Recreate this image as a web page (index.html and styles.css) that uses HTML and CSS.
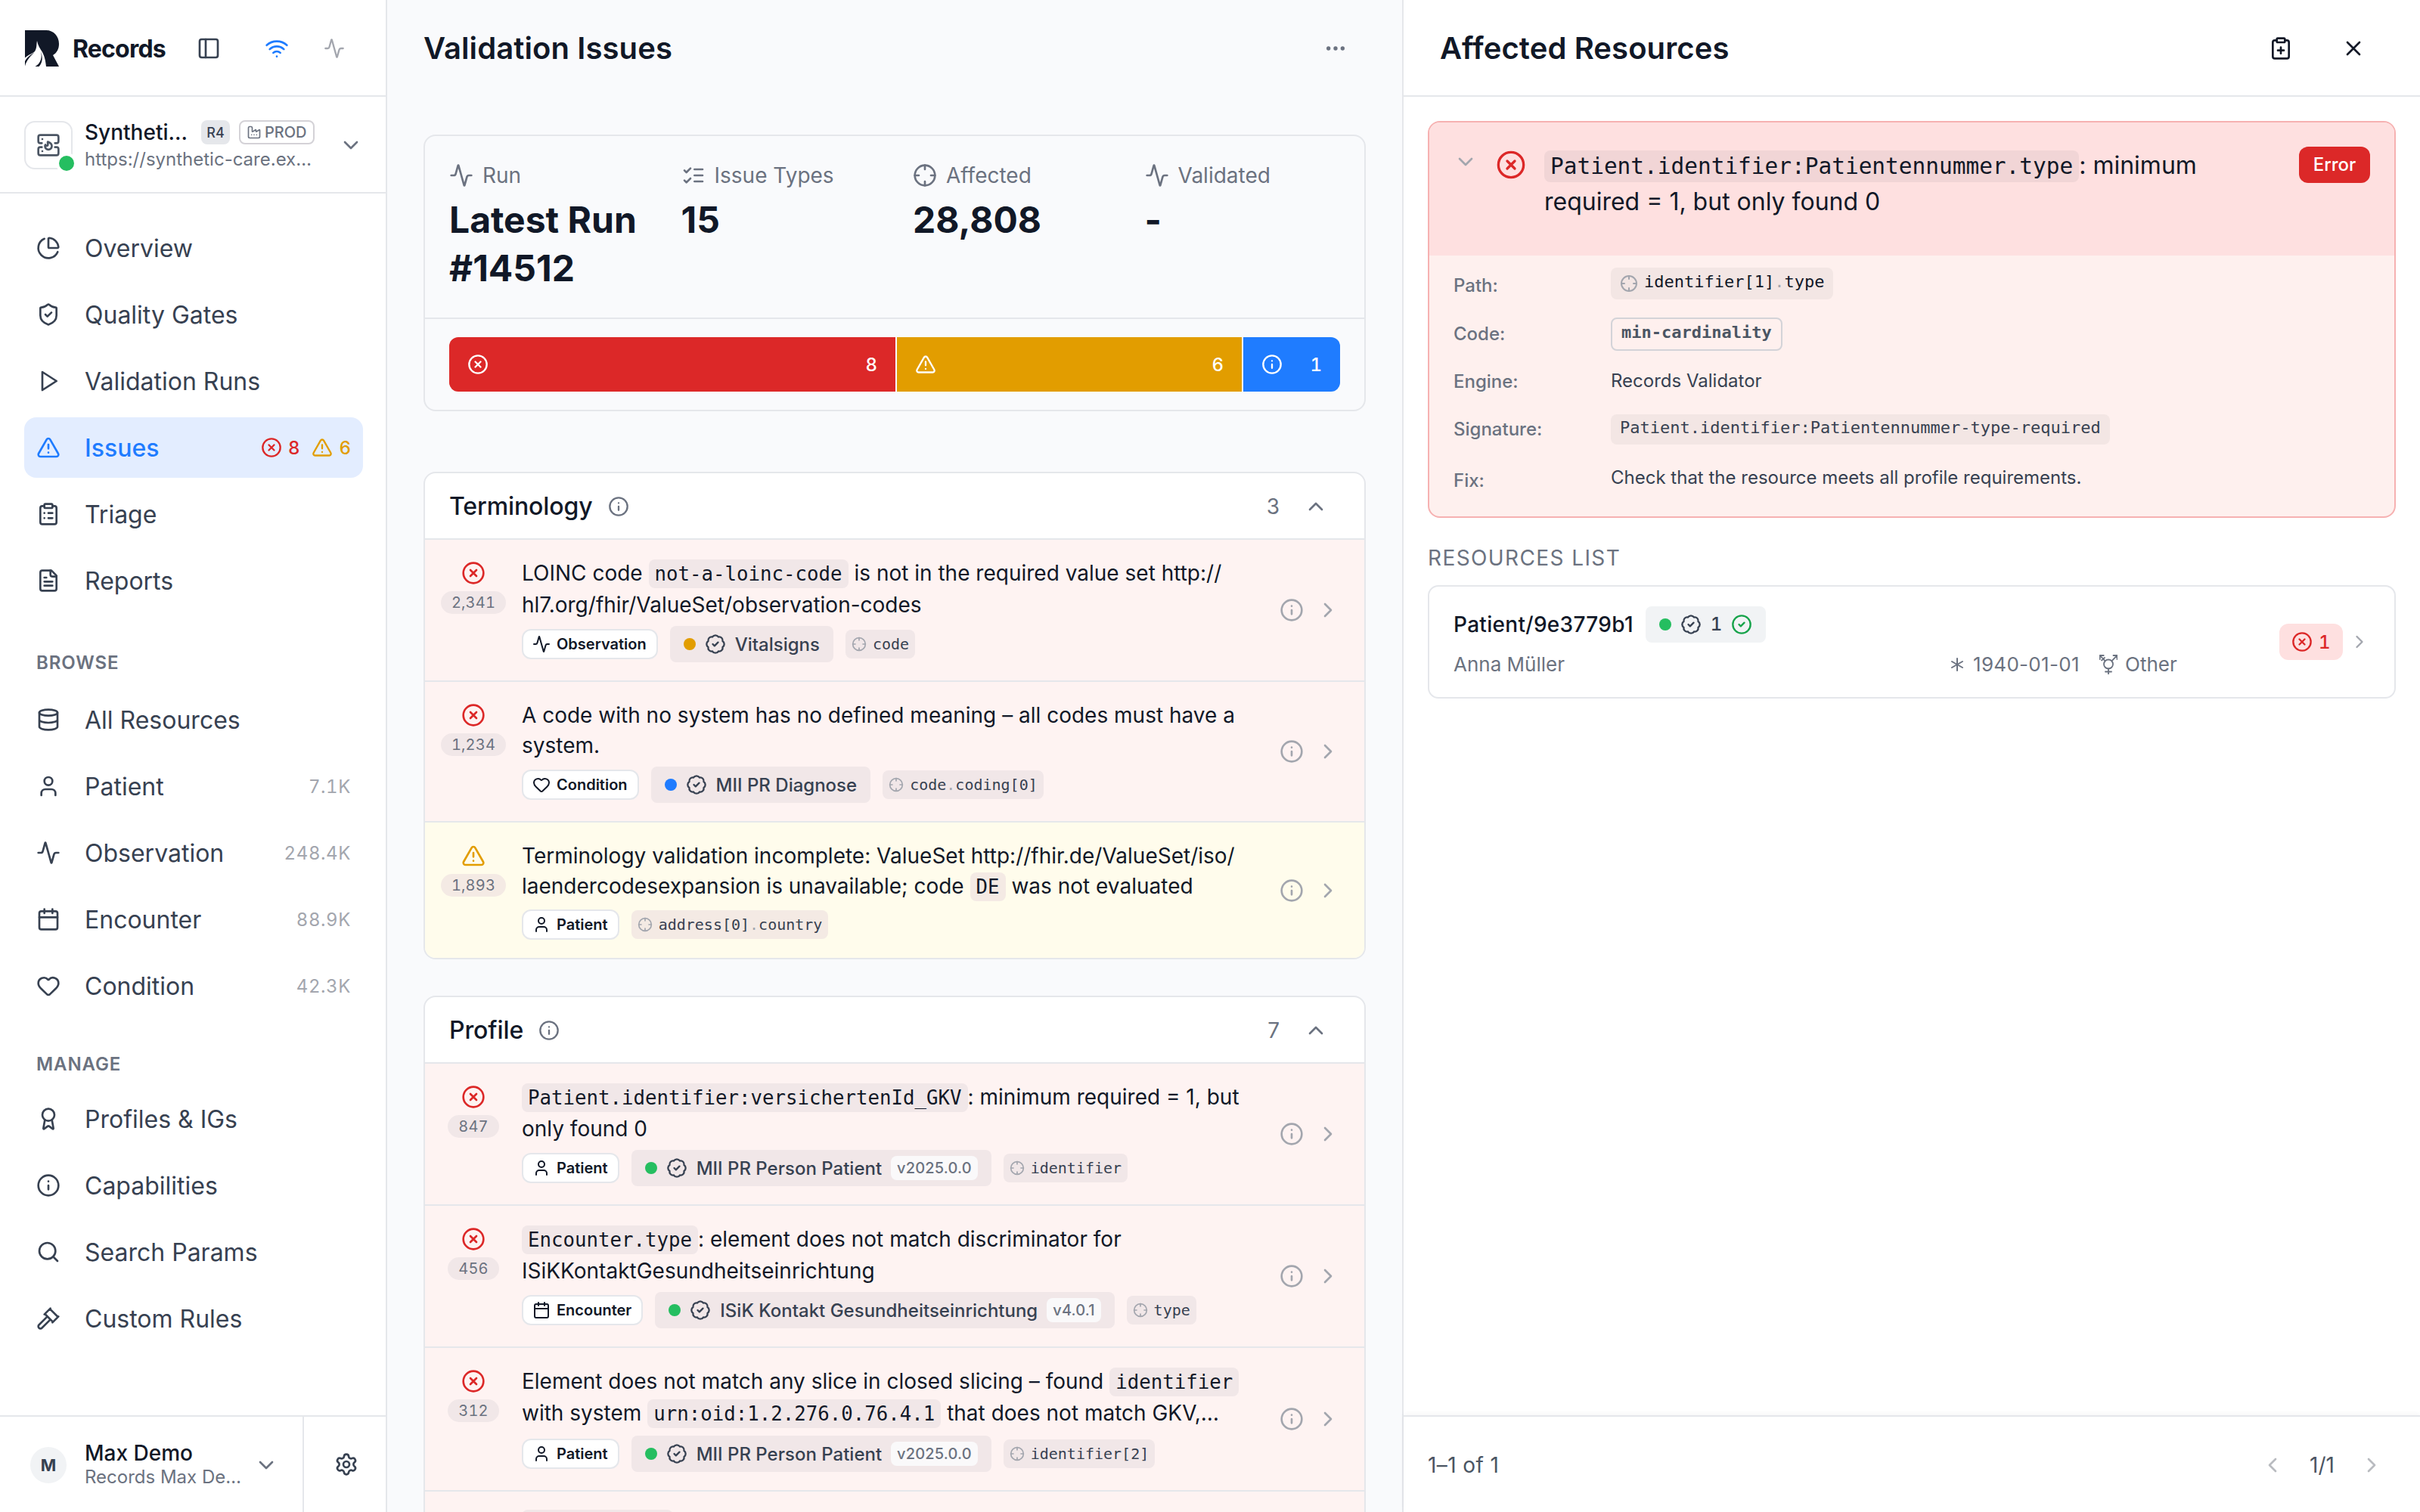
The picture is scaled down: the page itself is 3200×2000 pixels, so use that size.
FILE: index.html
```
<!DOCTYPE html>
<html lang="en">
<head>
    <meta charset="UTF-8">
    <title>Records - Validation Issues</title>
    <link rel="stylesheet" href="styles.css">
</head>
<body>
    <svg class="sprite">
        <symbol id="panel" viewBox="0 0 24 24"><rect x="3" y="3" width="18" height="18" rx="2"/><path d="M9 3v18"/></symbol>
        <symbol id="wifi" viewBox="0 0 24 24"><path d="M12 20h.01M2 8.82a15 15 0 0 1 20 0M5 12.86a10 10 0 0 1 14 0M8.5 16.43a5 5 0 0 1 7 0"/></symbol>
        <symbol id="activity" viewBox="0 0 24 24"><path d="M22 12h-2.48a2 2 0 0 0-1.93 1.46l-2.35 8.36a.25.25 0 0 1-.48 0L9.24 2.18a.25.25 0 0 0-.48 0l-2.35 8.36A2 2 0 0 1 4.49 12H2"/></symbol>
        <symbol id="server" viewBox="0 0 24 24"><path d="M5.5 10H4a2 2 0 0 1-2-2V4a2 2 0 0 1 2-2h16a2 2 0 0 1 2 2v4a2 2 0 0 1-2 2h-1.5M5.5 14H4a2 2 0 0 0-2 2v4a2 2 0 0 0 2 2h16a2 2 0 0 0 2-2v-4a2 2 0 0 0-2-2h-1.5M6 6h.01M6 18h.01"/><path d="M10 12.6c.9 0 1.5-.6 1.5-1.4 0-.9-.4-1.3-.1-2.5 2 .6 4 2.300 4 4.300a3.400 3.400 0 1 1-6.800 0c0-.6.2-1.200.5-1.500 0 .7.4 1.100.9 1.100z"/></symbol>
        <symbol id="factory" viewBox="0 0 24 24"><path d="M12 16h.01M16 16h.01M8 16h.01M3 19a2 2 0 0 0 2 2h14a2 2 0 0 0 2-2V8.500a.5.5 0 0 0-.769-.422l-4.462 2.844A.5.5 0 0 1 15 10.500v-2a.5.5 0 0 0-.769-.422L9.770 10.922A.5.5 0 0 1 9 10.500V5a2 2 0 0 0-2-2H5a2 2 0 0 0-2 2z"/></symbol>
        <symbol id="down" viewBox="0 0 24 24"><path d="m6 9 6 6 6-6"/></symbol>
        <symbol id="up" viewBox="0 0 24 24"><path d="m18 15-6-6-6 6"/></symbol>
        <symbol id="right" viewBox="0 0 24 24"><path d="m9 18 6-6-6-6"/></symbol>
        <symbol id="left" viewBox="0 0 24 24"><path d="m15 18-6-6 6-6"/></symbol>
        <symbol id="close" viewBox="0 0 24 24"><path d="M18 6 6 18M6 6l12 12"/></symbol>
        <symbol id="dots" viewBox="0 0 24 24"><circle cx="12" cy="12" r="1"/><circle cx="19" cy="12" r="1"/><circle cx="5" cy="12" r="1"/></symbol>
        <symbol id="pie" viewBox="0 0 24 24"><path d="M21 12c.552 0 1.005-.449.95-.998a10 10 0 0 0-8.953-8.951c-.55-.055-.998.398-.998.95v8a1 1 0 0 0 1 1z"/><path d="M21.210 15.890A10 10 0 1 1 8 2.830"/></symbol>
        <symbol id="shield" viewBox="0 0 24 24"><path d="M20 13c0 5-3.500 7.500-7.660 8.950a1 1 0 0 1-.67-.01C7.500 20.500 4 18 4 13V6a1 1 0 0 1 1-1c2 0 4.500-1.200 6.240-2.720a1.170 1.170 0 0 1 1.520 0C14.510 3.810 17 5 19 5a1 1 0 0 1 1 1z"/><path d="m9 12 2 2 4-4"/></symbol>
        <symbol id="play" viewBox="0 0 24 24"><path d="m6 3 14 9-14 9z"/></symbol>
        <symbol id="warning" viewBox="0 0 24 24"><path d="m21.730 18-8-14a2 2 0 0 0-3.480 0l-8 14A2 2 0 0 0 4 21h16a2 2 0 0 0 1.730-3M12 9v4M12 17h.01"/></symbol>
        <symbol id="error" viewBox="0 0 24 24"><circle cx="12" cy="12" r="10"/><path d="m15 9-6 6M9 9l6 6"/></symbol>
        <symbol id="info" viewBox="0 0 24 24"><circle cx="12" cy="12" r="10"/><path d="M12 16v-4M12 8h.01"/></symbol>
        <symbol id="check" viewBox="0 0 24 24"><circle cx="12" cy="12" r="10"/><path d="m9 12 2 2 4-4"/></symbol>
        <symbol id="seal" viewBox="0 0 24 24"><path d="M3.850 8.620a4 4 0 0 1 4.780-4.770 4 4 0 0 1 6.740 0 4 4 0 0 1 4.780 4.780 4 4 0 0 1 0 6.740 4 4 0 0 1-4.770 4.780 4 4 0 0 1-6.750 0 4 4 0 0 1-4.780-4.770 4 4 0 0 1 0-6.760Z"/><path d="m9 12 2 2 4-4"/></symbol>
        <symbol id="target" viewBox="0 0 24 24"><circle cx="12" cy="12" r="10"/><path d="M22 12h-4M6 12H2M12 6V2M12 22v-4"/></symbol>
        <symbol id="checklist" viewBox="0 0 24 24"><path d="m3 17 2 2 4-4M3 7l2 2 4-4M13 6h8M13 12h8M13 18h8"/></symbol>
        <symbol id="clipboard" viewBox="0 0 24 24"><rect x="8" y="2" width="8" height="4" rx="1"/><path d="M16 4h2a2 2 0 0 1 2 2v14a2 2 0 0 1-2 2H6a2 2 0 0 1-2-2V6a2 2 0 0 1 2-2h2M12 11h4M12 16h4M8 11h.01M8 16h.01"/></symbol>
        <symbol id="clipboard-plus" viewBox="0 0 24 24"><rect x="8" y="2" width="8" height="4" rx="1"/><path d="M16 4h2a2 2 0 0 1 2 2v14a2 2 0 0 1-2 2H6a2 2 0 0 1-2-2V6a2 2 0 0 1 2-2h2M9 14h6M12 17v-6"/></symbol>
        <symbol id="file" viewBox="0 0 24 24"><path d="M15 2H6a2 2 0 0 0-2 2v16a2 2 0 0 0 2 2h12a2 2 0 0 0 2-2V7Z"/><path d="M14 2v4a2 2 0 0 0 2 2h4M10 9H8M16 13H8M16 17H8"/></symbol>
        <symbol id="database" viewBox="0 0 24 24"><ellipse cx="12" cy="5" rx="9" ry="3"/><path d="M3 5v14a9 3 0 0 0 18 0V5M3 12a9 3 0 0 0 18 0"/></symbol>
        <symbol id="user" viewBox="0 0 24 24"><path d="M19 21v-2a4 4 0 0 0-4-4H9a4 4 0 0 0-4 4v2"/><circle cx="12" cy="7" r="4"/></symbol>
        <symbol id="calendar" viewBox="0 0 24 24"><path d="M8 2v4M16 2v4M3 10h18"/><rect x="3" y="4" width="18" height="18" rx="2"/></symbol>
        <symbol id="heart" viewBox="0 0 24 24"><path d="M2 9.500a5.500 5.500 0 0 1 9.591-3.676.56.56 0 0 0 .818 0A5.490 5.490 0 0 1 22 9.500c0 2.290-1.500 4-3 5.500l-5.492 5.313a2 2 0 0 1-3 .019L5 15c-1.500-1.500-3-3.200-3-5.500"/></symbol>
        <symbol id="award" viewBox="0 0 24 24"><path d="m15.477 12.890 1.515 8.526a.5.5 0 0 1-.81.470l-3.580-2.687a1 1 0 0 0-1.197 0l-3.586 2.686a.5.5 0 0 1-.81-.469l1.514-8.526"/><circle cx="12" cy="8" r="6"/></symbol>
        <symbol id="search" viewBox="0 0 24 24"><circle cx="11" cy="11" r="8"/><path d="m21 21-4.300-4.300"/></symbol>
        <symbol id="gavel" viewBox="0 0 24 24"><path d="m14 13-8.381 8.380a1 1 0 0 1-3.001-3l8.384-8.381M16 16l6-6M21.500 10.500l-8-8M8 8l6-6M8.500 7.500l8 8"/></symbol>
        <symbol id="gear" viewBox="0 0 24 24"><path d="M9.671 4.136a2.340 2.340 0 0 1 4.659 0 2.340 2.340 0 0 0 3.319 1.915 2.340 2.340 0 0 1 2.330 4.033 2.340 2.340 0 0 0 0 3.831 2.340 2.340 0 0 1-2.330 4.033 2.340 2.340 0 0 0-3.319 1.915 2.340 2.340 0 0 1-4.659 0 2.340 2.340 0 0 0-3.320-1.915 2.340 2.340 0 0 1-2.330-4.033 2.340 2.340 0 0 0 0-3.831A2.340 2.340 0 0 1 6.350 6.051a2.340 2.340 0 0 0 3.319-1.915"/><circle cx="12" cy="12" r="3"/></symbol>
        <symbol id="asterisk" viewBox="0 0 24 24"><path d="M12 4v16M19 8 5 16M5 8l14 8"/></symbol>
        <symbol id="gender" viewBox="0 0 24 26"><circle cx="12" cy="12.500" r="6"/><path d="M12 18.500V26M8 22.500h8M16.500 8.200 23.500 1M18.500 1h5v5M7.500 8.200.7 1M.7 6V1h5M3 7.500l4-3.500"/></symbol>
    </svg>

    <div class="app">
        <aside class="sidebar">
            <div class="brand">
                <svg class="logo" viewBox="0 0 46 48">
                    <path d="M0 0H28C38 0 45 8 45 18C45 25 42 30 37 33L45 48H28C27 39 26 35 23 29C20 24 17 20 16 14C15 19 16 23 13 28C10 31 5 32 0 36.500Z"/>
                    <path d="M12.500 29.500C6 33 1.500 37.500 0 41V47.500C2 40 7 34 12.500 29.500Z"/>
                    <path d="M20.500 27C23.500 35 21 44 13.500 48H18.500C23.500 43 24 35 20.500 27Z"/>
                </svg>
                <b>Records</b>
                <svg class="icon panel"><use href="#panel"/></svg>
                <svg class="icon blue"><use href="#wifi"/></svg>
                <svg class="icon i28 pale"><use href="#activity"/></svg>
            </div>
            <div class="server">
                <div class="server-icon"><svg class="icon"><use href="#server"/></svg><i></i></div>
                <div class="server-text">
                    <div class="server-name"><b>Syntheti…</b><span class="ver">R4</span><span class="env"><svg class="icon i20"><use href="#factory"/></svg>PROD</span></div>
                    <div class="server-url">https://synthetic-care.ex…</div>
                </div>
                <svg class="icon"><use href="#down"/></svg>
            </div>
            <ul class="nav">
                <li><svg class="icon"><use href="#pie"/></svg>Overview</li>
                <li><svg class="icon"><use href="#shield"/></svg>Quality Gates</li>
                <li><svg class="icon"><use href="#play"/></svg>Validation Runs</li>
                <li class="current"><svg class="icon"><use href="#warning"/></svg>Issues
                    <span class="marks"><span class="red"><svg class="icon i28"><use href="#error"/></svg>8</span><span class="amber"><svg class="icon i28"><use href="#warning"/></svg>6</span></span></li>
                <li><svg class="icon"><use href="#clipboard"/></svg>Triage</li>
                <li><svg class="icon"><use href="#file"/></svg>Reports</li>
            </ul>
            <h3>BROWSE</h3>
            <ul class="nav">
                <li><svg class="icon"><use href="#database"/></svg>All Resources</li>
                <li><svg class="icon"><use href="#user"/></svg>Patient<em>7.1K</em></li>
                <li><svg class="icon"><use href="#activity"/></svg>Observation<em>248.4K</em></li>
                <li><svg class="icon"><use href="#calendar"/></svg>Encounter<em>88.9K</em></li>
                <li><svg class="icon"><use href="#heart"/></svg>Condition<em>42.3K</em></li>
            </ul>
            <h3 class="manage">MANAGE</h3>
            <ul class="nav">
                <li><svg class="icon"><use href="#award"/></svg>Profiles &amp; IGs</li>
                <li><svg class="icon"><use href="#info"/></svg>Capabilities</li>
                <li><svg class="icon"><use href="#search"/></svg>Search Params</li>
                <li><svg class="icon"><use href="#gavel"/></svg>Custom Rules</li>
            </ul>
            <div class="account">
                <div class="account-user">
                    <span class="avatar">M</span>
                    <div><b>Max Demo</b><p>Records Max De…</p></div>
                    <svg class="icon"><use href="#down"/></svg>
                </div>
                <div class="account-set"><svg class="icon"><use href="#gear"/></svg></div>
            </div>
        </aside>

        <main class="main">
            <div class="main-head">
                <h1>Validation Issues</h1>
                <svg class="icon"><use href="#dots"/></svg>
            </div>

            <section class="stats">
                <div class="stats-grid">
                    <div><p><svg class="icon"><use href="#activity"/></svg>Run</p><b>Latest Run<br>#14512</b></div>
                    <div><p><svg class="icon"><use href="#checklist"/></svg>Issue Types</p><b>15</b></div>
                    <div><p><svg class="icon"><use href="#target"/></svg>Affected</p><b>28,808</b></div>
                    <div><p><svg class="icon"><use href="#activity"/></svg>Validated</p><b>-</b></div>
                </div>
                <div class="bar-wrap">
                    <div class="bar">
                        <div class="bar-error"><svg class="icon i28"><use href="#error"/></svg>8</div>
                        <div class="bar-warning"><svg class="icon i28"><use href="#warning"/></svg>6</div>
                        <div class="bar-info"><svg class="icon i28"><use href="#info"/></svg>1</div>
                    </div>
                </div>
            </section>

            <section class="group">
                <div class="group-head"><h2>Terminology</h2><svg class="icon i28"><use href="#info"/></svg><span>3</span><svg class="icon"><use href="#up"/></svg></div>
                <div class="issue">
                    <div class="level red"><svg class="icon"><use href="#error"/></svg><span>2,341</span></div>
                    <div class="issue-body">
                        <p>LOINC code <code>not-a-loinc-code</code> is not in the required value set http://<br>hl7.org/fhir/ValueSet/observation-codes</p>
                        <div class="tags">
                            <span class="type"><svg class="icon i24"><use href="#activity"/></svg>Observation</span>
                            <span class="profile"><i class="dot dot-amber"></i><svg class="icon i28"><use href="#seal"/></svg>Vitalsigns</span>
                            <span class="path"><svg class="icon i20"><use href="#target"/></svg>code</span>
                        </div>
                    </div>
                    <svg class="icon"><use href="#info"/></svg><svg class="icon"><use href="#right"/></svg>
                </div>
                <div class="issue">
                    <div class="level red"><svg class="icon"><use href="#error"/></svg><span>1,234</span></div>
                    <div class="issue-body">
                        <p>A code with no system has no defined meaning – all codes must have a<br>system.</p>
                        <div class="tags">
                            <span class="type"><svg class="icon i24"><use href="#heart"/></svg>Condition</span>
                            <span class="profile"><i class="dot dot-blue"></i><svg class="icon i28"><use href="#seal"/></svg>MII PR Diagnose</span>
                            <span class="path"><svg class="icon i20"><use href="#target"/></svg><span>code<s>.</s>coding[0]</span></span>
                        </div>
                    </div>
                    <svg class="icon"><use href="#info"/></svg><svg class="icon"><use href="#right"/></svg>
                </div>
                <div class="issue issue-warning">
                    <div class="level amber"><svg class="icon"><use href="#warning"/></svg><span>1,893</span></div>
                    <div class="issue-body">
                        <p>Terminology validation incomplete: ValueSet http://fhir.de/ValueSet/iso/<br>laendercodesexpansion is unavailable; code <code>DE</code> was not evaluated</p>
                        <div class="tags">
                            <span class="type"><svg class="icon i24"><use href="#user"/></svg>Patient</span>
                            <span class="path"><svg class="icon i20"><use href="#target"/></svg><span>address[0]<s>.</s>country</span></span>
                        </div>
                    </div>
                    <svg class="icon"><use href="#info"/></svg><svg class="icon"><use href="#right"/></svg>
                </div>
            </section>

            <section class="group">
                <div class="group-head"><h2>Profile</h2><svg class="icon i28"><use href="#info"/></svg><span>7</span><svg class="icon"><use href="#up"/></svg></div>
                <div class="issue">
                    <div class="level red"><svg class="icon"><use href="#error"/></svg><span>847</span></div>
                    <div class="issue-body">
                        <p><code>Patient.identifier:versichertenId_GKV</code>: minimum required = 1, but<br>only found 0</p>
                        <div class="tags">
                            <span class="type"><svg class="icon i24"><use href="#user"/></svg>Patient</span>
                            <span class="profile"><i class="dot dot-green"></i><svg class="icon i28"><use href="#seal"/></svg>MII PR Person Patient<u>v2025.0.0</u></span>
                            <span class="path"><svg class="icon i20"><use href="#target"/></svg>identifier</span>
                        </div>
                    </div>
                    <svg class="icon"><use href="#info"/></svg><svg class="icon"><use href="#right"/></svg>
                </div>
                <div class="issue">
                    <div class="level red"><svg class="icon"><use href="#error"/></svg><span>456</span></div>
                    <div class="issue-body">
                        <p><code>Encounter.type</code>: element does not match discriminator for<br>ISiKKontaktGesundheitseinrichtung</p>
                        <div class="tags">
                            <span class="type"><svg class="icon i24"><use href="#calendar"/></svg>Encounter</span>
                            <span class="profile"><i class="dot dot-green"></i><svg class="icon i28"><use href="#seal"/></svg>ISiK Kontakt Gesundheitseinrichtung<u>v4.0.1</u></span>
                            <span class="path"><svg class="icon i20"><use href="#target"/></svg>type</span>
                        </div>
                    </div>
                    <svg class="icon"><use href="#info"/></svg><svg class="icon"><use href="#right"/></svg>
                </div>
                <div class="issue">
                    <div class="level red"><svg class="icon"><use href="#error"/></svg><span>312</span></div>
                    <div class="issue-body">
                        <p>Element does not match any slice in closed slicing – found <code>identifier</code><br>with system <code>urn:oid:1.2.276.0.76.4.1</code> that does not match GKV,…</p>
                        <div class="tags">
                            <span class="type"><svg class="icon i24"><use href="#user"/></svg>Patient</span>
                            <span class="profile"><i class="dot dot-green"></i><svg class="icon i28"><use href="#seal"/></svg>MII PR Person Patient<u>v2025.0.0</u></span>
                            <span class="path"><svg class="icon i20"><use href="#target"/></svg>identifier[2]</span>
                        </div>
                    </div>
                    <svg class="icon"><use href="#info"/></svg><svg class="icon"><use href="#right"/></svg>
                </div>
                <!-- next row, only its top edge is inside the window -->
                <div class="issue issue-cut">
                    <div class="issue-body"><p><code></code></p></div>
                </div>
            </section>
        </main>

        <aside class="detail">
            <div class="detail-head">
                <h1>Affected Resources</h1>
                <svg class="icon"><use href="#clipboard-plus"/></svg>
                <svg class="icon"><use href="#close"/></svg>
            </div>
            <div class="detail-body">
                <section class="alert">
                    <div class="alert-head">
                        <svg class="icon fold"><use href="#down"/></svg>
                        <svg class="icon i40 red"><use href="#error"/></svg>
                        <p><code>Patient.identifier:Patientennummer.type</code>: minimum<br>required = 1, but only found 0</p>
                        <span class="badge">Error</span>
                    </div>
                    <dl>
                        <dt class="low">Path:</dt><dd><span class="mono"><svg class="icon i24"><use href="#target"/></svg><span>identifier[1]<s>.</s>type</span></span></dd>
                        <dt>Code:</dt><dd class="h44"><span class="mono mono-line">min-cardinality</span></dd>
                        <dt class="engine">Engine:</dt><dd class="h36">Records Validator</dd>
                        <dt>Signature:</dt><dd><span class="mono mono-sign">Patient.identifier:Patientennummer-type-required</span></dd>
                        <dt class="lower">Fix:</dt><dd class="fix">Check that the resource meets all profile requirements.</dd>
                    </dl>
                </section>
                <h4>RESOURCES LIST</h4>
                <section class="resource">
                    <div class="resource-main">
                        <div class="resource-id"><b>Patient/9e3779b1</b><span class="valid"><i class="dot dot-green"></i><svg class="icon i28"><use href="#seal"/></svg>1<svg class="icon i28 green"><use href="#check"/></svg></span></div>
                        <div class="resource-meta"><span class="who">Anna Müller</span><svg class="icon i24"><use href="#asterisk"/></svg><span class="born">1940-01-01</span><svg class="icon gender"><use href="#gender"/></svg>Other</div>
                    </div>
                    <span class="count"><svg class="icon i28"><use href="#error"/></svg>1</span>
                    <svg class="icon i28 pale"><use href="#right"/></svg>
                </section>
            </div>
            <div class="pager">
                <span>1–1 of 1</span>
                <svg class="icon"><use href="#left"/></svg>
                <b>1/1</b>
                <svg class="icon"><use href="#right"/></svg>
            </div>
        </aside>
    </div>
</body>
</html>
```

FILE: styles.css
```
body, div, ul, li, p, h1, h2, h3, h4, dl, dt, dd {
    margin: 0;
    padding: 0;
}
* {
    box-sizing: border-box;
}
ul {
    list-style: none;
}
b, em, i, s, u {
    font-style: normal;
    text-decoration: none;
}
body {
    background-color: #f9fafc;
    font-family: Inter, "Liberation Sans", sans-serif;
    font-size: 28px;
    color: #111827;
    overflow: hidden;
}
.sprite {
    position: absolute;
    width: 0;
    height: 0;
}
.icon {
    flex: none;
    display: block;
    width: 32px;
    height: 32px;
    fill: none;
    stroke: currentColor;
    stroke-width: 2;
    stroke-linecap: round;
    stroke-linejoin: round;
}
.i20 { width: 20px; height: 20px; }
.i24 { width: 24px; height: 24px; }
.i28 { width: 28px; height: 28px; }
.i40 { width: 40px; height: 40px; }
.red { color: #dc2828; }
.amber { color: #e29d00; }
.blue { color: #1f7cff; }
.green { color: #16a34a; }
.pale { color: #a3a6ae; }
.dot {
    width: 16px;
    height: 16px;
    border-radius: 50%;
}
.dot-amber { background-color: #e29d00; }
.dot-blue { background-color: #1f7cff; }
.dot-green { background-color: #25be60; }
.app {
    display: flex;
    width: 3200px;
    height: 2000px;
}

/* sidebar */
.sidebar {
    flex: none;
    display: flex;
    flex-direction: column;
    width: 512px;
    background-color: #fff;
    border-right: 2px solid #e5e7eb;
}
.brand {
    display: flex;
    align-items: center;
    height: 128px;
    padding: 2px 0 0 33px;
    border-bottom: 2px solid #e5e7eb;
    color: #374151;
}
.logo {
    width: 46px;
    height: 48px;
    margin-right: 17px;
    fill: #111827;
}
.brand b {
    width: 164px;
    font-size: 32px;
    letter-spacing: -0.8px;
    color: #111827;
}
.brand .blue {
    margin: 0 46px 0 58px;
}
.server {
    display: flex;
    align-items: center;
    height: 128px;
    padding: 2px 30px 0 32px;
    border-bottom: 2px solid #e5e7eb;
    color: #4b5563;
}
.server-icon {
    position: relative;
    display: flex;
    align-items: center;
    justify-content: center;
    width: 64px;
    height: 64px;
    margin-right: 16px;
    border: 2px solid #e5e7eb;
    border-radius: 14px;
}
.server-icon i {
    position: absolute;
    right: -4px;
    bottom: -4px;
    width: 20px;
    height: 20px;
    border-radius: 50%;
    background-color: #25be60;
    box-shadow: 0 0 0 4px #fff;
}
.server-text {
    width: 336px;
}
.server-name {
    display: flex;
    align-items: center;
    height: 32px;
    margin-top: 2px;
    font-size: 20px;
}
.server-name b {
    width: 154px;
    font-size: 28px;
    font-weight: 500;
    color: #111827;
}
.ver, .env {
    display: flex;
    align-items: center;
    height: 32px;
    border-radius: 8px;
}
.ver {
    justify-content: center;
    width: 38px;
    margin-right: 12px;
    background-color: #e5e7eb;
    font-size: 18px;
    font-weight: 500;
    color: #374151;
}
.env {
    width: 100px;
    padding-left: 8px;
    border: 2px solid #d4d2d7;
    font-weight: 500;
    color: #6b7280;
}
.env .icon {
    margin-right: 4px;
}
.server-url {
    height: 36px;
    line-height: 40px;
    font-size: 24px;
    color: #6b7280;
}
.server > .icon {
    color: #6b7280;
}
.nav {
    display: flex;
    flex-direction: column;
    gap: 8px;
    padding: 0 30px 0 32px;
}
.server + .nav {
    padding-top: 32px;
}
.nav li {
    display: flex;
    align-items: center;
    height: 80px;
    padding: 0 16px;
    border-radius: 16px;
    font-size: 32px;
    color: #374151;
}
.nav li > .icon {
    margin-right: 32px;
}
.nav .current {
    background-color: #e3edff;
    font-weight: 500;
    color: #1f7cff;
}
.nav em {
    margin-left: auto;
    font-size: 24px;
    font-variant-numeric: tabular-nums;
    letter-spacing: 0.6px;
    color: #a3a6ae;
}
.marks {
    display: flex;
    gap: 16px;
    margin-left: auto;
    font-size: 24px;
    font-variant-numeric: tabular-nums;
}
.marks span {
    display: flex;
    align-items: center;
    gap: 8px;
}
.sidebar h3 {
    height: 104px;
    padding: 54px 0 0 48px;
    line-height: 30px;
    font-size: 24px;
    font-weight: 600;
    letter-spacing: 0.9px;
    color: #6b7280;
}
.sidebar .manage {
    height: 96px;
    padding-top: 49px;
}
.account {
    display: flex;
    height: 128px;
    margin-top: auto;
    border-top: 2px solid #e5e7eb;
}
.account-user {
    display: flex;
    align-items: center;
    width: 402px;
    padding: 1px 0 0 40px;
    border-right: 2px solid #e5e7eb;
    color: #6b7280;
}
.account-user > div {
    width: 224px;
}
.account-user b, .account-user p {
    display: block;
    line-height: 32px;
}
.account-user b {
    font-weight: 500;
    color: #111827;
}
.account-user p {
    font-size: 24px;
    line-height: 31px;
}
.avatar {
    width: 48px;
    height: 48px;
    margin-right: 24px;
    border-radius: 50%;
    background-color: #f1f3f5;
    line-height: 48px;
    font-size: 22px;
    font-weight: 700;
    text-align: center;
    color: #374151;
}
.account-set {
    display: flex;
    align-items: center;
    padding-left: 40px;
    color: #374151;
}

/* issue list */
.main {
    flex: none;
    display: flex;
    flex-direction: column;
    width: 1342px;
    height: 2000px;
    padding: 0 48px;
    overflow: hidden;
}
.main > * {
    flex: none;
}
h1 {
    font-size: 40px;
    font-weight: 600;
    letter-spacing: 0.1px;
}
.main-head {
    display: flex;
    align-items: center;
    justify-content: space-between;
    height: 126px;
    margin-bottom: 52px;
    padding: 1px 24px 0 0;
}
.main-head .icon {
    color: #6b7280;
}
.stats {
    height: 366px;
    border: 2px solid #e5e7eb;
    border-radius: 16px;
}
.stats-grid {
    display: grid;
    grid-template-columns: repeat(4, 1fr);
    gap: 48px;
    height: 242px;
    padding: 32px;
    border-bottom: 2px solid #e5e7eb;
}
.stats-grid p {
    display: flex;
    align-items: center;
    gap: 12px;
    height: 40px;
    margin-bottom: 7px;
    white-space: nowrap;
    color: #6b7280;
}
.stats-grid b {
    display: block;
    line-height: 64px;
    font-size: 48px;
    white-space: nowrap;
}
.bar-wrap {
    padding: 24px 32px;
}
.bar {
    display: flex;
    gap: 2px;
    height: 72px;
    border-radius: 12px;
    overflow: hidden;
    color: #fff;
}
.bar div {
    display: flex;
    align-items: center;
    justify-content: space-between;
    padding: 0 24px;
    font-size: 24px;
    font-weight: 500;
    font-variant-numeric: tabular-nums;
}
.bar-error {
    width: 590px;
    background-color: #dc2828;
}
.bar-warning {
    width: 456px;
    background-color: #e29d00;
}
.bar-info {
    flex: 1;
    background-color: #1f7cff;
}
.group {
    margin-top: 48px;
    border: 2px solid #e5e7eb;
    border-radius: 16px;
    overflow: hidden;
    background-color: #fff;
}
.stats + .group {
    margin-top: 80px;
}
.group-head {
    display: flex;
    align-items: center;
    height: 86px;
    padding: 1px 48px 0 32px;
    color: #6b7280;
}
.group-head h2 {
    margin-right: 20px;
    font-size: 32px;
    font-weight: 500;
    letter-spacing: -0.1px;
    color: #111827;
}
.group-head span {
    margin: 0 32px 0 auto;
}
.issue {
    display: flex;
    align-items: center;
    border-top: 2px solid #e5e7eb;
    padding: 24px 32px 24px 0;
    background-color: #fef3f2;
    color: #a3a6ae;
}
.issue-warning {
    background-color: #fffcec;
}
.issue > .icon + .icon {
    margin-left: 16px;
}
.level {
    align-self: flex-start;
    display: flex;
    flex-direction: column;
    align-items: center;
    gap: 8px;
    width: 128px;
    padding-top: 4px;
}
.level span {
    height: 30px;
    padding: 0 14px;
    border-radius: 15px;
    background-color: #f1e7e8;
    line-height: 30px;
    font-size: 20px;
    font-variant-numeric: tabular-nums;
    letter-spacing: 0.2px;
    color: #6b7280;
}
.issue-body {
    flex: 1;
}
.issue-body p {
    line-height: 40px;
    white-space: nowrap;
    color: #111827;
}
code {
    display: inline-block;
    padding: 2px 8px;
    border-radius: 8px;
    background-color: #f1e7e8;
    font-family: "DejaVu Sans Mono", monospace;
    font-size: 0.92em;
    line-height: 34px;
}
.issue-body code {
    margin-bottom: 2px;
}
.issue-warning code, .issue-warning .path, .issue-warning .level span {
    background-color: #f4eae4;
}
.tags {
    display: flex;
    align-items: center;
    gap: 16px;
    margin-top: 8px;
}
.issue-warning .tags {
    margin-top: 9px;
}
.type, .profile, .path {
    display: flex;
    align-items: center;
    white-space: nowrap;
}
.type {
    height: 40px;
    gap: 8px;
    padding: 0 13px 0 12px;
    border: 2px solid #e5e7eb;
    border-radius: 12px;
    background-color: #fff;
    font-size: 20px;
    font-weight: 600;
    color: #111827;
}
.profile {
    height: 48px;
    gap: 12px;
    padding: 0 18px;
    border-radius: 8px;
    background-color: #f1e7e8;
    font-size: 24px;
    font-weight: 500;
    color: #374151;
}
.profile u {
    height: 32px;
    padding: 0 8px;
    border-radius: 8px;
    background-color: #faf9fa;
    line-height: 32px;
    font-size: 20px;
    letter-spacing: 0.15px;
    color: #6b7280;
}
.path {
    height: 38px;
    gap: 8px;
    padding: 0 8px;
    border-radius: 8px;
    background-color: #f1e7e8;
    font-family: "DejaVu Sans Mono", monospace;
    font-size: 20px;
    color: #374151;
}
.path .icon, .mono .icon, s {
    color: #a3a6ae;
}
.issue-cut {
    padding-left: 128px;
}
.issue-cut code {
    width: 200px;
    height: 38px;
}

/* detail panel */
.detail {
    flex: 1;
    display: flex;
    flex-direction: column;
    border-left: 2px solid #e5e7eb;
    background-color: #fff;
}
.detail-head {
    display: flex;
    align-items: center;
    gap: 64px;
    height: 128px;
    padding: 1px 72px 0 48px;
    border-bottom: 2px solid #e5e7eb;
}
.detail-head h1 {
    flex: 1;
}
.detail-body {
    flex: 1;
    padding: 32px;
}
.alert {
    height: 525px;
    border: 2px solid #f6b1b1;
    border-radius: 16px;
    overflow: hidden;
    background-color: #fef0ee;
}
.alert-head {
    display: flex;
    align-items: flex-start;
    height: 176px;
    padding: 32px 32px 0;
    background-color: #fee0e0;
}
.alert-head .fold {
    margin: 4px 24px 0 0;
    color: #a3a6ae;
}
.alert-head .red {
    margin: 4px 24px 0 0;
}
.alert-head p {
    flex: 1;
    padding-top: 1px;
    line-height: 48px;
    font-size: 32px;
}
.alert-head code {
    background-color: #f1d5d6;
    line-height: 38px;
}
.badge {
    width: 94px;
    height: 48px;
    border-radius: 12px;
    background-color: #dc2828;
    line-height: 48px;
    font-size: 24px;
    font-weight: 500;
    text-align: center;
    color: #fff;
}
dl {
    display: grid;
    grid-template-columns: 208px 1fr;
    row-gap: 24px;
    align-items: center;
    padding: 16px 32px;
    font-size: 24px;
    color: #374151;
}
dt {
    height: 30px;
    line-height: 30px;
    font-weight: 500;
    color: #6b7280;
}
.low {
    padding-top: 3px;
}
.lower {
    padding-top: 4px;
}
.engine {
    margin-top: -3px;
}
dd {
    display: flex;
    align-items: center;
    height: 40px;
}
.low + dd {
    height: 42px;
}
.h44 {
    height: 44px;
}
.h36 {
    height: 36px;
    padding-bottom: 5px;
}
.fix {
    padding-bottom: 1px;
}
.mono {
    display: flex;
    align-items: center;
    gap: 8px;
    height: 42px;
    padding: 0 12px 5px;
    border-radius: 8px;
    background-color: #f3e6e4;
    font-family: "DejaVu Sans Mono", monospace;
    font-size: 22px;
    color: #111827;
}
.mono .icon {
    margin-top: 4px;
}
.mono-line {
    height: 44px;
    border: 2px solid #d3d3d8;
    background: none;
    font-weight: 700;
    color: #4b5563;
}
.mono-sign {
    height: 40px;
    color: #374151;
}
h4 {
    height: 89px;
    padding-top: 32px;
    line-height: 42px;
    font-size: 28px;
    font-weight: 400;
    letter-spacing: 1.4px;
    color: #6b7280;
}
.resource {
    display: flex;
    align-items: center;
    height: 150px;
    padding: 0 32px;
    border: 2px solid #e5e7eb;
    border-radius: 14px;
}
.resource-main {
    flex: 1;
}
.resource-id {
    display: flex;
    align-items: center;
    gap: 16px;
    height: 48px;
}
.resource-id b {
    font-weight: 500;
    letter-spacing: 0.3px;
}
.valid {
    display: flex;
    align-items: center;
    gap: 12px;
    height: 48px;
    padding: 0 18px;
    border-radius: 8px;
    background-color: #f1f3f5;
    font-size: 24px;
    font-weight: 500;
    font-variant-numeric: tabular-nums;
    color: #374151;
}
.resource-meta {
    display: flex;
    align-items: center;
    height: 36px;
    margin-top: 11px;
    font-size: 26px;
    color: #6b7280;
}
.who {
    width: 654px;
}
.born {
    width: 167px;
    margin-left: 9px;
    letter-spacing: 0.3px;
    white-space: nowrap;
}
.gender {
    width: 24px;
    height: 26px;
    margin-right: 10px;
    stroke-width: 1.8;
    overflow: visible;
}
.count {
    display: flex;
    align-items: center;
    gap: 8px;
    width: 84px;
    height: 48px;
    margin-right: 8px;
    padding-left: 16px;
    border-radius: 12px;
    background-color: #fee0e0;
    font-size: 24px;
    font-weight: 500;
    font-variant-numeric: tabular-nums;
    color: #dc2828;
}
.pager {
    display: flex;
    align-items: center;
    height: 128px;
    padding: 2px 48px 0 32px;
    border-top: 2px solid #e5e7eb;
    box-shadow: 0 -2px 6px rgba(0, 0, 0, 0.04);
    color: #4b5563;
}
.pager span {
    flex: 1;
    letter-spacing: 0.4px;
}
.pager b {
    width: 99px;
    text-align: center;
    font-weight: 400;
}
.pager .icon {
    color: #b9bbc0;
}
```
